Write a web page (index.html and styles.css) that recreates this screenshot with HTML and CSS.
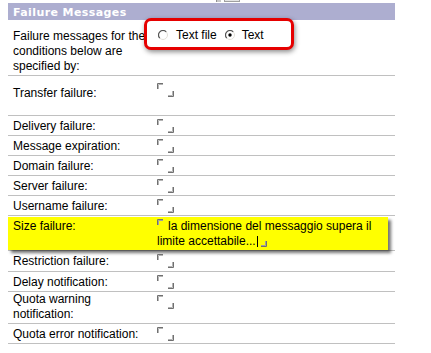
FILE: index.html
```html
<!DOCTYPE html>
<html>
<head>
<meta charset="utf-8">
<link rel="stylesheet" href="styles.css">
</head>
<body>
<div class="page">
  <div class="topstrip"><span class="nub nub-a"></span><span class="nub nub-b"></span></div>
  <div class="hdr">Failure Messages</div>

  <div class="row intro">
    <div class="lbl">Failure messages for the conditions below are specified by:</div>
    <div class="val"></div>
    <div class="callout">
      <svg class="radio" width="10" height="10" viewBox="0 0 10 10"><circle cx="5" cy="5" r="4.5" fill="#fff" stroke="#e2dfd8"/><path d="M8.2 1.8A4.5 4.5 0 0 0 1.8 8.2" fill="none" stroke="#555" stroke-width="1.2"/></svg><span class="rtext">Text file</span><svg class="radio r2" width="10" height="10" viewBox="0 0 10 10"><circle cx="5" cy="5" r="4.5" fill="#fff" stroke="#e2dfd8"/><path d="M8.2 1.8A4.5 4.5 0 0 0 1.8 8.2" fill="none" stroke="#555" stroke-width="1.2"/><circle cx="5" cy="5" r="1.7" fill="#000"/></svg><span class="rtext t2">Text</span>
    </div>
  </div>

  <div class="row tall">
    <div class="lbl">Transfer failure:</div>
    <div class="val"><svg class="mk tl" width="6" height="6" viewBox="0 0 6 6"><path d="M0.5 6V0.5H6" stroke="#707070" fill="none"/><path d="M1.5 6V1.5H6" stroke="#b4b4b4" fill="none"/></svg><svg class="mk br" width="6" height="6" viewBox="0 0 6 6"><path d="M0 5.5H5.5V0" stroke="#707070" fill="none"/><path d="M0 4.5H4.5V0" stroke="#b4b4b4" fill="none"/></svg></div>
  </div>

  <div class="row">
    <div class="lbl">Delivery failure:</div>
    <div class="val"><svg class="mk tl" width="6" height="6" viewBox="0 0 6 6"><path d="M0.5 6V0.5H6" stroke="#707070" fill="none"/><path d="M1.5 6V1.5H6" stroke="#b4b4b4" fill="none"/></svg><svg class="mk br" width="6" height="6" viewBox="0 0 6 6"><path d="M0 5.5H5.5V0" stroke="#707070" fill="none"/><path d="M0 4.5H4.5V0" stroke="#b4b4b4" fill="none"/></svg></div>
  </div>

  <div class="row">
    <div class="lbl">Message expiration:</div>
    <div class="val"><svg class="mk tl" width="6" height="6" viewBox="0 0 6 6"><path d="M0.5 6V0.5H6" stroke="#707070" fill="none"/><path d="M1.5 6V1.5H6" stroke="#b4b4b4" fill="none"/></svg><svg class="mk br" width="6" height="6" viewBox="0 0 6 6"><path d="M0 5.5H5.5V0" stroke="#707070" fill="none"/><path d="M0 4.5H4.5V0" stroke="#b4b4b4" fill="none"/></svg></div>
  </div>

  <div class="row">
    <div class="lbl">Domain failure:</div>
    <div class="val"><svg class="mk tl" width="6" height="6" viewBox="0 0 6 6"><path d="M0.5 6V0.5H6" stroke="#707070" fill="none"/><path d="M1.5 6V1.5H6" stroke="#b4b4b4" fill="none"/></svg><svg class="mk br" width="6" height="6" viewBox="0 0 6 6"><path d="M0 5.5H5.5V0" stroke="#707070" fill="none"/><path d="M0 4.5H4.5V0" stroke="#b4b4b4" fill="none"/></svg></div>
  </div>

  <div class="row">
    <div class="lbl">Server failure:</div>
    <div class="val"><svg class="mk tl" width="6" height="6" viewBox="0 0 6 6"><path d="M0.5 6V0.5H6" stroke="#707070" fill="none"/><path d="M1.5 6V1.5H6" stroke="#b4b4b4" fill="none"/></svg><svg class="mk br" width="6" height="6" viewBox="0 0 6 6"><path d="M0 5.5H5.5V0" stroke="#707070" fill="none"/><path d="M0 4.5H4.5V0" stroke="#b4b4b4" fill="none"/></svg></div>
  </div>

  <div class="row">
    <div class="lbl">Username failure:</div>
    <div class="val"><svg class="mk tl" width="6" height="6" viewBox="0 0 6 6"><path d="M0.5 6V0.5H6" stroke="#707070" fill="none"/><path d="M1.5 6V1.5H6" stroke="#b4b4b4" fill="none"/></svg><svg class="mk br" width="6" height="6" viewBox="0 0 6 6"><path d="M0 5.5H5.5V0" stroke="#707070" fill="none"/><path d="M0 4.5H4.5V0" stroke="#b4b4b4" fill="none"/></svg></div>
  </div>

  <div class="row size">
    <div class="hl">
      <div class="lbl">Size failure:</div>
      <div class="val"><svg class="mk tl" width="6" height="6" viewBox="0 0 6 6"><path d="M0.5 6V0.5H6" stroke="#707070" fill="none"/><path d="M1.5 6V1.5H6" stroke="#a0a0a0" fill="none"/></svg>la dimensione del messaggio supera il limite accettabile...<span class="caret"></span><svg class="mk br br-text" width="6" height="6" viewBox="0 0 6 6"><path d="M0 5.5H5.5V0" stroke="#707070" fill="none"/><path d="M0 4.5H4.5V0" stroke="#a0a0a0" fill="none"/></svg></div>
    </div>
  </div>

  <div class="row r20">
    <div class="lbl">Restriction failure:</div>
    <div class="val"><svg class="mk tl" width="6" height="6" viewBox="0 0 6 6"><path d="M0.5 6V0.5H6" stroke="#707070" fill="none"/><path d="M1.5 6V1.5H6" stroke="#b4b4b4" fill="none"/></svg><svg class="mk br" width="6" height="6" viewBox="0 0 6 6"><path d="M0 5.5H5.5V0" stroke="#707070" fill="none"/><path d="M0 4.5H4.5V0" stroke="#b4b4b4" fill="none"/></svg></div>
  </div>

  <div class="row">
    <div class="lbl">Delay notification:</div>
    <div class="val"><svg class="mk tl" width="6" height="6" viewBox="0 0 6 6"><path d="M0.5 6V0.5H6" stroke="#707070" fill="none"/><path d="M1.5 6V1.5H6" stroke="#b4b4b4" fill="none"/></svg><svg class="mk br" width="6" height="6" viewBox="0 0 6 6"><path d="M0 5.5H5.5V0" stroke="#707070" fill="none"/><path d="M0 4.5H4.5V0" stroke="#b4b4b4" fill="none"/></svg></div>
  </div>

  <div class="row two">
    <div class="lbl">Quota warning notification:</div>
    <div class="val"><svg class="mk tl" width="6" height="6" viewBox="0 0 6 6"><path d="M0.5 6V0.5H6" stroke="#707070" fill="none"/><path d="M1.5 6V1.5H6" stroke="#b4b4b4" fill="none"/></svg><svg class="mk br" width="6" height="6" viewBox="0 0 6 6"><path d="M0 5.5H5.5V0" stroke="#707070" fill="none"/><path d="M0 4.5H4.5V0" stroke="#b4b4b4" fill="none"/></svg></div>
  </div>

  <div class="row">
    <div class="lbl">Quota error notification:</div>
    <div class="val"><svg class="mk tl" width="6" height="6" viewBox="0 0 6 6"><path d="M0.5 6V0.5H6" stroke="#707070" fill="none"/><path d="M1.5 6V1.5H6" stroke="#b4b4b4" fill="none"/></svg><svg class="mk br" width="6" height="6" viewBox="0 0 6 6"><path d="M0 5.5H5.5V0" stroke="#707070" fill="none"/><path d="M0 4.5H4.5V0" stroke="#b4b4b4" fill="none"/></svg></div>
  </div>
</div>
</body>
</html>
```

FILE: styles.css
```css
html, body {
  margin: 0;
  padding: 0;
  background: #ffffff;
}

body {
  font-family: "Liberation Sans", Arial, sans-serif;
  font-size: 12px;
  line-height: 15px;
  color: #000000;
}

.page {
  width: 387px;
  padding-left: 8px;
}

.topstrip {
  height: 3px;
  display: flex;
  align-items: flex-start;
  padding-left: 208px;
}

.nub {
  display: block;
  height: 2px;
}

.nub-a {
  width: 4px;
  background: #c8c8c8;
  border-left: 1px solid #909090;
}

.nub-b {
  width: 14px;
  margin-left: 3px;
  background: #e4e4e4;
  border: 1px solid #a0a0a0;
  border-top: none;
  height: 1px;
}

.hdr {
  height: 17px;
  box-sizing: border-box;
  padding: 2px 0 0 5px;
  background: #adaed0;
  color: #ffffff;
  font-family: "DejaVu Sans", Verdana, sans-serif;
  font-weight: bold;
  font-size: 11px;
  letter-spacing: 0.4px;
  line-height: 15px;
}

.row {
  display: grid;
  grid-template-columns: 147px 1fr;
  border-bottom: 1px solid #c0c0c0;
}

.lbl {
  padding: 3px 5px 1px 5px;
}

.val {
  padding: 3px 0 1px 2px;
}

.mk {
  display: inline-block;
}

.mk.tl {
  vertical-align: 5px;
  margin-right: 5px;
}

.mk.br {
  vertical-align: -3px;
}

.mk.br-text {
  vertical-align: -2px;
  margin-left: 3px;
}

.caret {
  display: inline-block;
  width: 1px;
  height: 11px;
  background: #000000;
  vertical-align: -2px;
  margin-left: 1px;
}

/* intro row with callout */
.row.intro {
  position: relative;
}

.row.intro .lbl {
  padding-top: 9px;
}

.callout {
  position: absolute;
  left: 136px;
  top: -2px;
  width: 150px;
  height: 32px;
  box-sizing: border-box;
  border: 3px solid #e60000;
  border-radius: 7px;
  background: #ffffff;
  box-shadow: 1px 2px 5px rgba(0, 0, 0, 0.45);
  padding: 7px 0 0 11px;
  white-space: nowrap;
}

.radio {
  display: inline-block;
  vertical-align: -1px;
}

.radio.r2 {
  margin-left: 8px;
}

.rtext {
  margin-left: 8px;
}

.rtext.t2 {
  margin-left: 7px;
}

/* tall transfer row */
.row.tall {
  min-height: 39px;
}

.row.tall .lbl {
  padding-top: 10px;
}

.row.tall .val {
  padding-top: 7px;
}

/* highlighted size row */
.row.size {
  display: block;
}

.hl {
  display: grid;
  grid-template-columns: 147px 1fr;
  margin: 1px 7px 0 0;
  background: #ffff00;
  box-shadow: 3px 3px 3px rgba(0, 0, 0, 0.55);
}

.hl .lbl {
  padding-top: 2px;
}

.hl .val {
  padding-top: 2px;
}

.row.r20 .lbl,
.row.r20 .val {
  padding-bottom: 2px;
}

.row.two .lbl {
  padding-top: 0;
}
```
